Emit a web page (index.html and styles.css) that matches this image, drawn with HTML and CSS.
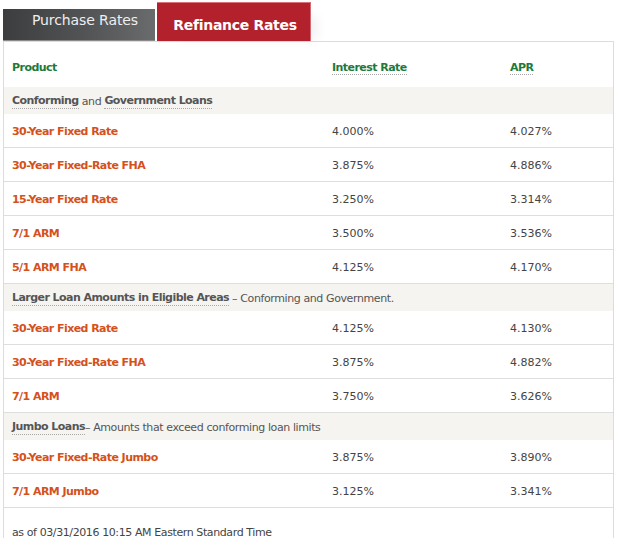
FILE: index.html
```html
<!DOCTYPE html>
<html>
<head>
<meta charset="utf-8">
<link rel="stylesheet" href="styles.css">
</head>
<body>
<div class="wrap">
  <div class="tabs">
    <div class="tab tab-purchase">Purchase Rates</div>
    <div class="tab tab-refi">Refinance Rates</div>
  </div>
  <div class="panel">
    <div class="row head">
      <div class="c">Product</div>
      <div class="c"><span class="dot">Interest Rate</span></div>
      <div class="c"><span class="dot">APR</span></div>
    </div>

    <div class="section"><span class="dot b">Conforming</span> and <span class="dot b">Government Loans</span></div>
    <div class="row"><div class="c prod">30-Year Fixed Rate</div><div class="c num">4.000%</div><div class="c num">4.027%</div></div>
    <div class="row"><div class="c prod">30-Year Fixed-Rate FHA</div><div class="c num">3.875%</div><div class="c num">4.886%</div></div>
    <div class="row"><div class="c prod">15-Year Fixed Rate</div><div class="c num">3.250%</div><div class="c num">3.314%</div></div>
    <div class="row"><div class="c prod">7/1 ARM</div><div class="c num">3.500%</div><div class="c num">3.536%</div></div>
    <div class="row"><div class="c prod">5/1 ARM FHA</div><div class="c num">4.125%</div><div class="c num">4.170%</div></div>

    <div class="section"><span class="dot b">Larger Loan Amounts in Eligible Areas</span> – Conforming and Government.</div>
    <div class="row"><div class="c prod">30-Year Fixed Rate</div><div class="c num">4.125%</div><div class="c num">4.130%</div></div>
    <div class="row"><div class="c prod">30-Year Fixed-Rate FHA</div><div class="c num">3.875%</div><div class="c num">4.882%</div></div>
    <div class="row"><div class="c prod">7/1 ARM</div><div class="c num">3.750%</div><div class="c num">3.626%</div></div>

    <div class="section"><span class="dot b">Jumbo Loans</span>– Amounts that exceed conforming loan limits</div>
    <div class="row"><div class="c prod">30-Year Fixed-Rate Jumbo</div><div class="c num">3.875%</div><div class="c num">3.890%</div></div>
    <div class="row"><div class="c prod">7/1 ARM Jumbo</div><div class="c num">3.125%</div><div class="c num">3.341%</div></div>

    <div class="foot">as of 03/31/2016 10:15 AM Eastern Standard Time</div>
  </div>
</div>
</body>
</html>
```

FILE: styles.css
```css
html, body {
  margin: 0;
  padding: 0;
  background: #fff;
}
body {
  font-family: "DejaVu Sans", Verdana, sans-serif;
  font-size: 11px;
  color: #444;
  letter-spacing: -0.4px;
}
.wrap {
  width: 617px;
  padding-left: 3px;
  box-sizing: border-box;
}
.tabs {
  display: flex;
  align-items: flex-end;
  height: 41px;
}
.tab {
  box-sizing: border-box;
  color: #fff;
}
.tab-purchase {
  width: 152px;
  height: 32px;
  margin-right: 2px;
  background: linear-gradient(to right, #3c3d3f 0%, #555658 60%, #6a6b6d 100%);
  color: #eeeeee;
  font-size: 14px;
  letter-spacing: -0.1px;
  padding: 1px 0 0 29px;
  line-height: 20px;
  border-bottom: 1px solid #8a8a8a;
}
.tab-refi {
  width: 154px;
  height: 39px;
  background: #b3222c;
  border-top: 1px solid #d7707a;
  border-right: 1px solid #d36a73;
  font-size: 14px;
  font-weight: bold;
  text-align: center;
  padding: 13px 0 0 3px;
  line-height: 18px;
  letter-spacing: -0.3px;
  box-shadow: 14px 6px 12px -8px rgba(0, 0, 0, 0.06);
}
.panel {
  width: 611px;
  box-sizing: border-box;
  border: 1px solid #dcdcdc;
  border-bottom: none;
  min-height: 497px;
}
.row {
  display: grid;
  grid-template-columns: 320px 178px 1fr;
  padding-left: 8px;
  padding-top: 2px;
  height: 34px;
  box-sizing: border-box;
  border-bottom: 1px solid #dedede;
  align-items: center;
  line-height: 14px;
}
.row.head {
  height: 45px;
  border-bottom: none;
  align-items: start;
  padding-top: 19px;
  color: #1b7a3d;
  font-weight: bold;
  letter-spacing: -0.55px;
}
.prod {
  color: #d5511b;
  font-weight: bold;
  letter-spacing: -0.55px;
}
.num {
  letter-spacing: 0;
}
.c {
  white-space: nowrap;
}
.section {
  background: #f5f4f0;
  height: 27px;
  padding-left: 8px;
  padding-top: 2px;
  box-sizing: border-box;
  display: flex;
  align-items: center;
  white-space: pre;
  color: #555;
  line-height: 14px;
}
.dot {
  border-bottom: 1px dotted #a8a8a8;
  padding-bottom: 0;
}
.b {
  font-weight: bold;
  color: #555;
  letter-spacing: -0.55px;
}
.foot {
  padding: 18px 0 0 8px;
  color: #444;
  line-height: 14px;
}
```
